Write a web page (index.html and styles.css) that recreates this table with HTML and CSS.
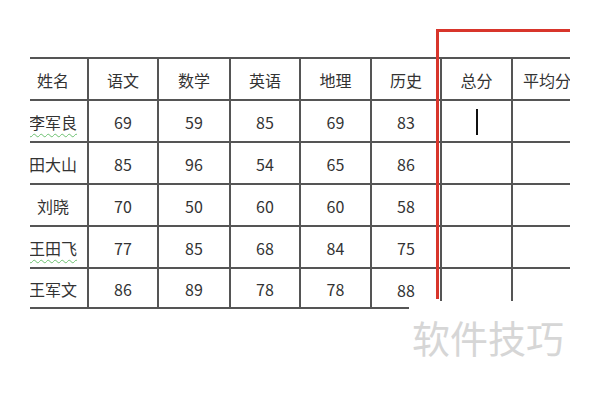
FILE: index.html
```html
<!DOCTYPE html>
<html lang="zh">
<head>
<meta charset="utf-8">
<link rel="stylesheet" href="styles.css">
</head>
<body>
<div class="page">
  <div class="clip">
    <div class="sheet">
      <div class="cell">姓名</div><div class="cell">语文</div><div class="cell">数学</div><div class="cell">英语</div><div class="cell">地理</div><div class="cell">历史</div><div class="cell">总分</div><div class="cell">平均分</div>
      <div class="cell"><span class="wavy">李军良</span></div><div class="cell">69</div><div class="cell">59</div><div class="cell">85</div><div class="cell">69</div><div class="cell">83</div><div class="cell"><span class="caret"></span></div><div class="cell"></div>
      <div class="cell">田大山</div><div class="cell">85</div><div class="cell">96</div><div class="cell">54</div><div class="cell">65</div><div class="cell">86</div><div class="cell"></div><div class="cell"></div>
      <div class="cell">刘晓</div><div class="cell">70</div><div class="cell">50</div><div class="cell">60</div><div class="cell">60</div><div class="cell">58</div><div class="cell"></div><div class="cell"></div>
      <div class="cell"><span class="wavy">王田飞</span></div><div class="cell">77</div><div class="cell">85</div><div class="cell">68</div><div class="cell">84</div><div class="cell">75</div><div class="cell"></div><div class="cell"></div>
      <div class="cell last">王军文</div><div class="cell last">86</div><div class="cell last">89</div><div class="cell last">78</div><div class="cell last">78</div><div class="cell last partial">88</div><div class="cell last open"></div><div class="cell last open"></div>
    </div>
  </div>
  <div class="highlight"></div>
  <div class="watermark">软件技巧</div>
</div>
</body>
</html>
```

FILE: styles.css
```css
html, body {
  margin: 0;
  padding: 0;
  background: #ffffff;
}

.page {
  position: relative;
  width: 600px;
  height: 400px;
  padding: 57px 0 0 30px;
  box-sizing: border-box;
  font-family: "Noto Sans CJK SC", "Noto Sans", sans-serif;
  color: #333333;
}

.clip {
  width: 540px;
  overflow: hidden;
}

.sheet {
  display: grid;
  grid-template-columns: 70px 70px 72px 70px 71px 70px 71px 70px;
  grid-auto-rows: 42px;
  margin-left: -13px;
  width: 564px;
}

.cell {
  box-sizing: border-box;
  border-top: 2px solid #555555;
  border-left: 2px solid #555555;
  display: flex;
  align-items: center;
  justify-content: center;
  font-size: 16px;
  line-height: 1;
  padding-top: 2px;
  white-space: nowrap;
}

.cell.last {
  height: 42px;
  border-bottom: 2px solid #555555;
}

.cell.partial {
  border-bottom: none;
  background: linear-gradient(#555555, #555555) no-repeat left bottom / 37px 2px;
}

.cell.open {
  border-bottom: none;
  border-left: none;
  background: linear-gradient(#555555, #555555) no-repeat left top / 2px 32px;
}

.wavy {
  text-decoration: underline wavy #6cc070;
  text-decoration-thickness: 1px;
  text-underline-offset: 4px;
}

.caret {
  display: block;
  width: 2px;
  height: 26px;
  background: #111111;
  margin-left: 1px;
}

.highlight {
  position: absolute;
  left: 436px;
  top: 29px;
  width: 134px;
  height: 270px;
  border-top: 3px solid #d8352b;
  border-left: 3px solid #d8352b;
  box-sizing: border-box;
}

.watermark {
  position: absolute;
  left: 412px;
  top: 314px;
  font-size: 38px;
  line-height: 46px;
  color: #d6d6d6;
  letter-spacing: 0px;
}
```
